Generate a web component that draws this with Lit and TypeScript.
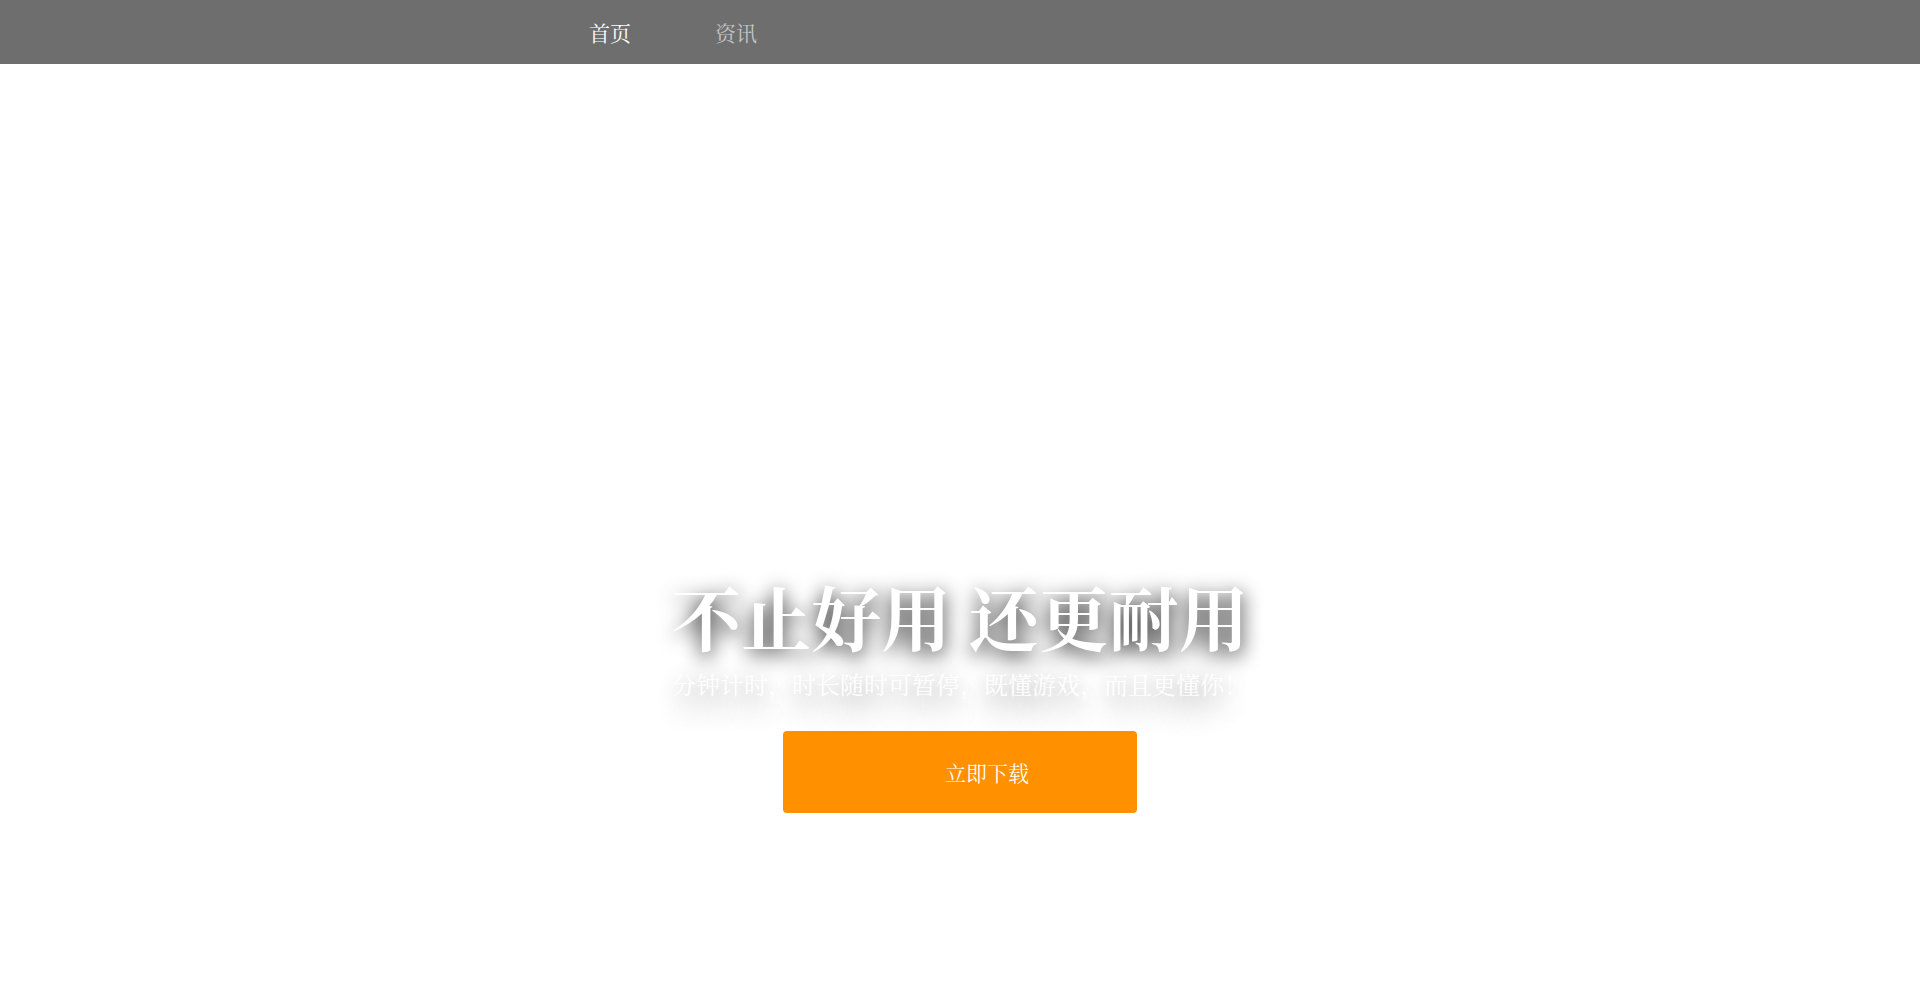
import { LitElement, html, css } from "lit";
import { customElement } from "lit/decorators.js";

@customElement("app-root")
export class AppRoot extends LitElement {
  static styles = css`
    :host {
      display: flex;
      flex-direction: column;
      min-height: 100vh;
      background: #fff;
      color: #fff;
      font-family: "Noto Serif CJK SC", "Noto Serif SC", "Source Han Serif SC", serif;
      font-weight: 400;
    }
    .bar {
      background: #6e6e6e;
    }
    .nav {
      display: flex;
      gap: 84px;
      max-width: 742px;
      height: 64px;
      margin: 0 auto;
      align-items: center;
    }
    .link {
      color: #c5c5c5;
      font-size: 21px;
      line-height: 32px;
      text-decoration: none;
    }
    .current {
      color: #fff;
    }
    .hero {
      flex: 1;
      display: flex;
      flex-direction: column;
      align-items: center;
      justify-content: flex-end;
      padding-bottom: 180px;
      text-align: center;
    }
    .title {
      margin: 0 0 7px;
      font-size: 70px;
      line-height: 88px;
      font-weight: 700;
      text-shadow: 0 5px 20px rgba(0, 0, 0, 0.95);
    }
    .lead {
      margin: 0 0 30px;
      font-size: 24px;
      line-height: 34px;
      text-shadow: 0 2px 20px rgba(0, 0, 0, 0.3), 0 20px 24px rgba(0, 0, 0, 0.25);
    }
    .download {
      box-sizing: border-box;
      width: 354px;
      height: 82px;
      padding: 0 0 0 54px;
      border: 0;
      border-radius: 4px;
      background: #ff9000;
      color: #fff;
      font-family: inherit;
      font-size: 21px;
      cursor: pointer;
    }
  `;

  render() {
    return html`
      <header class="bar">
        <nav class="nav">
          <a class="link current" href="#home" aria-current="page">首页</a>
          <a class="link" href="#news">资讯</a>
        </nav>
      </header>
      <main class="hero">
        <h1 class="title">不止好用 还更耐用</h1>
        <p class="lead">分钟计时，时长随时可暂停，既懂游戏，而且更懂你！</p>
        <button class="download" type="button">立即下载</button>
      </main>
    `;
  }
}
